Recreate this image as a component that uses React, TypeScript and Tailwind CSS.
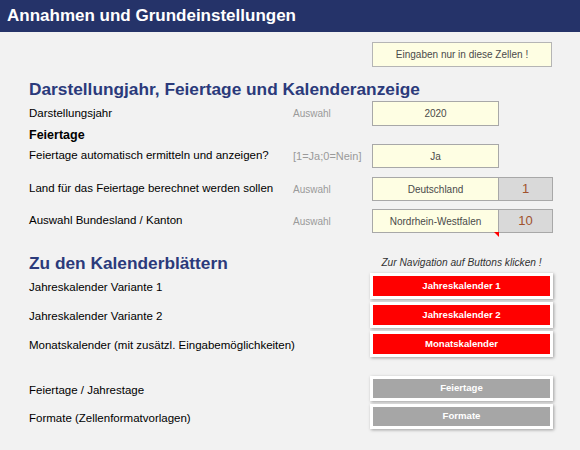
import React from 'react'

const font = { fontFamily: '"Liberation Sans", Arial, sans-serif' }

function Row({
  label,
  hint,
  value,
  code,
  marker,
  hintSize = 'text-[10px]',
  className = '',
}: {
  label: string
  hint: string
  value: string
  code?: string
  marker?: boolean
  hintSize?: string
  className?: string
}) {
  return (
    <div className={`flex items-center ${className}`}>
      <div className="w-[264px] whitespace-nowrap text-[11.5px] text-black">{label}</div>
      <div className={`w-[79px] whitespace-nowrap text-[#9a9a9a] ${hintSize}`}>{hint}</div>
      <div className="flex h-full">
        <div className="relative flex h-full w-[127px] items-center justify-center border border-[#a8a8a8] bg-[#fefee3] text-[10px] text-[#4a4a4a]">
          {value}
          {marker && (
            <div className="absolute -bottom-[5px] -right-[1px] h-0 w-0 border-l-[5px] border-t-[5px] border-l-transparent border-t-[#ff0000]" />
          )}
        </div>
        {code && (
          <div className="flex h-full w-[54px] items-center justify-center border border-l-0 border-[#a8a8a8] bg-[#d9d9d9] text-[13px] text-[#a0522d]">
            {code}
          </div>
        )}
      </div>
    </div>
  )
}

function NavButton({
  label,
  text,
  grey,
  className = '',
}: {
  label: string
  text: string
  grey?: boolean
  className?: string
}) {
  return (
    <div className={`flex items-center ${className}`}>
      <div className="w-[341px] whitespace-nowrap pt-[4px] text-[11.5px] text-black">{label}</div>
      <div className="h-full w-[183px] border-[3px] border-white shadow-[1px_1px_3px_rgba(0,0,0,0.35)]">
        <div
          className={`flex h-full items-center justify-center text-[9.6px] font-bold text-white ${
            grey ? 'bg-[#a6a6a6]' : 'bg-[#ff0000]'
          }`}
        >
          {text}
        </div>
      </div>
    </div>
  )
}

export default function App() {
  return (
    <div className="h-[450px] w-[580px] overflow-hidden bg-[#f2f2f2]" style={font}>
      <div className="flex h-[32px] items-center bg-[#253369] pl-[7px] text-[17px] font-bold text-white">
        Annahmen und Grundeinstellungen
      </div>

      <div className="pl-[29px]">
        <div className="ml-[343px] mt-[10px] flex h-[25px] w-[180px] items-center justify-center border border-[#b5b5b5] bg-[#fefee3] text-[10px] text-[#4a4a4a]">
          Eingaben nur in diese Zellen !
        </div>

        <div className="mt-[10px] h-[24px] whitespace-nowrap text-[17.3px] font-bold leading-[24px] text-[#2b3a7b]">
          Darstellungjahr, Feiertage und Kalenderanzeige
        </div>

        <Row className="h-[25px]" label="Darstellungsjahr" hint="Auswahl" value="2020" />

        <div className="h-[18px] text-[12.5px] font-bold leading-[18px] text-black">Feiertage</div>

        <Row
          className="h-[24px]"
          label="Feiertage automatisch ermitteln und anzeigen?"
          hint="[1=Ja;0=Nein]"
          hintSize="text-[11px]"
          value="Ja"
        />
        <Row
          className="mt-[9px] h-[24px]"
          label="Land für das Feiertage berechnet werden sollen"
          hint="Auswahl"
          value="Deutschland"
          code="1"
        />
        <Row
          className="mt-[8px] h-[24px]"
          label="Auswahl Bundesland / Kanton"
          hint="Auswahl"
          value="Nordrhein-Westfalen"
          code="10"
          marker
        />

        <div className="mt-[20px] flex h-[20px] items-center">
          <div className="w-[341px] whitespace-nowrap text-[17.3px] font-bold leading-[20px] text-[#2b3a7b]">
            Zu den Kalenderblättern
          </div>
          <div className="w-[183px] whitespace-nowrap text-center text-[10.2px] italic text-[#333]">
            Zur Navigation auf Buttons klicken !
          </div>
        </div>

        <NavButton className="h-[26px]" label="Jahreskalender Variante 1" text="Jahreskalender 1" />
        <NavButton className="mt-[3px] h-[26px]" label="Jahreskalender Variante 2" text="Jahreskalender 2" />
        <NavButton
          className="mt-[3px] h-[26px]"
          label="Monatskalender (mit zusätzl. Eingabemöglichkeiten)"
          text="Monatskalender"
        />
        <NavButton className="mt-[19px] h-[25px]" label="Feiertage / Jahrestage" text="Feiertage" grey />
        <NavButton className="mt-[3px] h-[25px]" label="Formate (Zellenformatvorlagen)" text="Formate" grey />
      </div>
    </div>
  )
}
